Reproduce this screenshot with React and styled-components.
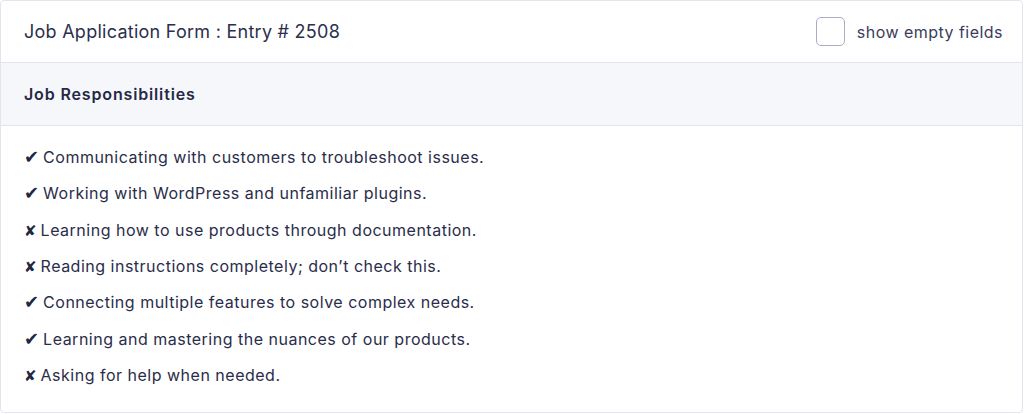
import React, { useState } from 'react'
import styled, { createGlobalStyle } from 'styled-components'

const GlobalStyle = createGlobalStyle`
  body {
    margin: 0;
    background: #ffffff;
    font-family: 'Inter', 'Noto Sans', sans-serif;
    color: #262944;
  }
`

const Card = styled.div`
  width: 1023px;
  height: 413px;
  box-sizing: border-box;
  border: 1px solid #e3e5ee;
  border-radius: 4px;
  background: #fff;
  display: flex;
  flex-direction: column;
  overflow: hidden;
`

const Header = styled.div`
  height: 62px;
  box-sizing: border-box;
  display: flex;
  align-items: center;
  justify-content: space-between;
  padding: 0 19px 0 23px;
  border-bottom: 1px solid #e3e5ee;
`

const Title = styled.h2`
  margin: 0;
  font-size: 18px;
  font-weight: 400;
  letter-spacing: 0.26px;
  color: #2c2f4c;
`

const Toggle = styled.label`
  display: flex;
  align-items: center;
  gap: 12px;
  font-size: 16px;
  letter-spacing: 0.47px;
  color: #3a3d5a;
  cursor: pointer;
`

const Box = styled.span`
  width: 29px;
  height: 29px;
  box-sizing: border-box;
  border: 1.5px solid #a9acc6;
  border-radius: 5px;
  background: ${p => (p.$on ? '#5b5fc7' : '#fff')};
`

const SectionHead = styled.div`
  height: 63px;
  box-sizing: border-box;
  display: flex;
  align-items: center;
  padding: 0 23px;
  background: #f6f7fb;
  border-bottom: 1px solid #e3e5ee;
  font-size: 16px;
  font-weight: 600;
  letter-spacing: 0.85px;
  color: #262944;
`

const List = styled.ul`
  list-style: none;
  margin: 0;
  padding: 13px 23px 0;
`

const Item = styled.li`
  font-size: 16px;
  line-height: 36.35px;
  letter-spacing: 0.5px;
  color: #2a2d4a;
`

const Mark = styled.span`
  display: inline-block;
  line-height: 1;
  font-family: 'DejaVu Sans', sans-serif;
  font-size: ${p => (p.$ok ? '18px' : '15px')};
  letter-spacing: 0;
  margin-right: ${p => (p.$ok ? '4px' : '4px')};
  color: #23263f;
`

const items = [
  [true, 'Communicating with customers to troubleshoot issues.'],
  [true, 'Working with WordPress and unfamiliar plugins.'],
  [false, 'Learning how to use products through documentation.'],
  [false, 'Reading instructions completely; don\u2019t check this.'],
  [true, 'Connecting multiple features to solve complex needs.'],
  [true, 'Learning and mastering the nuances of our products.'],
  [false, 'Asking for help when needed.'],
]

const App = () => {
  const [showEmpty, setShowEmpty] = useState(false)
  return (
    <>
      <GlobalStyle />
      <Card>
        <Header>
          <Title>Job Application Form : Entry # 2508</Title>
          <Toggle onClick={() => setShowEmpty(!showEmpty)}>
            <Box $on={showEmpty} />
            show empty fields
          </Toggle>
        </Header>
        <SectionHead>Job Responsibilities</SectionHead>
        <List>
          {items.map(([ok, text]) => (
            <Item key={text}>
              <Mark $ok={ok}>{ok ? '\u2714' : '\u2718'}</Mark>
              {text}
            </Item>
          ))}
        </List>
      </Card>
    </>
  )
}

export default App
